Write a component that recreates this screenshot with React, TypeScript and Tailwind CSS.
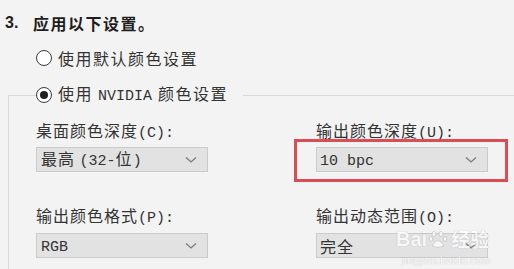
import React from "react";

const cjk = "font-['Noto_Sans_CJK_SC',sans-serif]";
const mono = "font-['Liberation_Mono','Noto_Sans_CJK_SC',monospace]";

function L({ children }: { children: React.ReactNode }) {
  return <span className={`${mono} text-[15px] tracking-normal`}>{children}</span>;
}

function Chevron() {
  return (
    <svg width="12" height="8" viewBox="0 0 12 8" fill="none">
      <polyline points="1,1.5 6,6 11,1.5" stroke="#7a7a7a" strokeWidth="1.3" />
    </svg>
  );
}

function Dropdown({ children, pad = "pl-[4px]" }: { children: React.ReactNode; pad?: string }) {
  return (
    <div
      className={`w-[172px] h-[25px] bg-[#e2e2e2] border border-[#cbcbcb] flex items-center justify-between ${pad} pr-[10px] text-[16px] tracking-[1px] text-[#333] ${cjk}`}
    >
      <span className="leading-[20px]">{children}</span>
      <Chevron />
    </div>
  );
}

function Radio({ checked }: { checked?: boolean }) {
  return (
    <span className="w-[16px] h-[16px] rounded-full border-[1.5px] border-[#3a3a3a] bg-white flex items-center justify-center shrink-0">
      {checked && <span className="w-[8px] h-[8px] rounded-full bg-[#1f1f1f]" />}
    </span>
  );
}

export default function App() {
  return (
    <div className={`relative w-[514px] h-[269px] overflow-hidden bg-[#f3f3f3] text-[#333] ${cjk}`}>
      {/* title */}
      <div className="pt-[13px] pl-[5px] h-[33px] flex items-center font-bold text-[#1e1e1e] text-[16px] leading-[20px]">
        <span className="font-['Liberation_Sans',sans-serif] w-[28px]">3.</span>
        <span className="tracking-[1.5px]">应用以下设置。</span>
      </div>

      {/* radio 1 */}
      <div className="mt-[15px] ml-[36px] h-[20px] flex items-center gap-[6px] text-[16px] tracking-[1.5px] leading-[20px]">
        <Radio />
        <span>使用默认颜色设置</span>
      </div>

      {/* group */}
      <div className="mt-[27px] ml-[8px] border-l border-t border-[#d9d9d9] h-[200px]">
        <div className="-mt-[12px] ml-[27px] h-[22px] w-fit pr-[15px] bg-[#f3f3f3] flex items-center gap-[6px] text-[16px] tracking-[1.5px] leading-[20px]">
          <Radio checked />
          <span>
            使用<span className="ml-[5px]"><L>NVIDIA</L></span>
            <span className="ml-[6px]">颜色设置</span>
          </span>
        </div>

        <div className="pl-[27px] grid grid-cols-[280px_1fr] text-[16px] tracking-[1px] leading-[20px]">
          <div>
            <div className="mt-[14px] h-[20px]">
              桌面颜色深度<L>(C):</L>
            </div>
            <div className="mt-[7px]">
              <Dropdown>
                最高 <L>(32-</L>位<L>)</L>
              </Dropdown>
            </div>
            <div className="mt-[33px] h-[20px]">
              输出颜色格式<L>(P):</L>
            </div>
            <div className="mt-[8px]">
              <Dropdown>
                <L>RGB</L>
              </Dropdown>
            </div>
          </div>
          <div>
            <div className="mt-[14px] h-[20px]">
              输出颜色深度<L>(U):</L>
            </div>
            <div className="mt-[7px] relative w-[172px]">
              <Dropdown pad="pl-[3px]">
                <L>10 bpc</L>
              </Dropdown>
              <span className="absolute -left-[22px] -top-[8px] w-[214px] h-[43px] border-[3px] border-[#dc4c52]" />
            </div>
            <div className="mt-[33px] h-[20px]">
              输出动态范围<L>(O):</L>
            </div>
            <div className="mt-[8px]">
              <Dropdown pad="pl-[3px]">完全</Dropdown>
            </div>
          </div>
        </div>
      </div>

      {/* watermark */}
      <div className="absolute left-[396px] top-[228px] h-[22px] flex items-center text-white font-['Liberation_Sans',sans-serif] font-bold text-[20px] leading-[22px] opacity-75 [text-shadow:0_0_1px_#9a9a9a]">
        <span>Bai</span>
        <svg width="20" height="20" viewBox="0 0 20 20" className="mx-[1px]">
          <ellipse cx="6" cy="5" rx="2" ry="2.6" fill="#fff" stroke="#aaa" strokeWidth="0.6" />
          <ellipse cx="13" cy="5" rx="2" ry="2.6" fill="#fff" stroke="#aaa" strokeWidth="0.6" />
          <ellipse cx="3" cy="10" rx="1.8" ry="2.3" fill="#fff" stroke="#aaa" strokeWidth="0.6" />
          <ellipse cx="17" cy="10" rx="1.8" ry="2.3" fill="#fff" stroke="#aaa" strokeWidth="0.6" />
          <path d="M4 17 Q10 6 16 17 Q10 20 4 17Z" fill="#fff" stroke="#aaa" strokeWidth="0.6" />
        </svg>
        <span className={`${cjk} text-[19px] ml-[2px]`}>经验</span>
      </div>
      <div className="absolute left-[402px] top-[254px] text-white text-[11px] leading-[12px] font-['Liberation_Sans',sans-serif] opacity-75 [text-shadow:0_0_1px_#9a9a9a]">
        jingyan.baidu.com
      </div>
    </div>
  );
}
